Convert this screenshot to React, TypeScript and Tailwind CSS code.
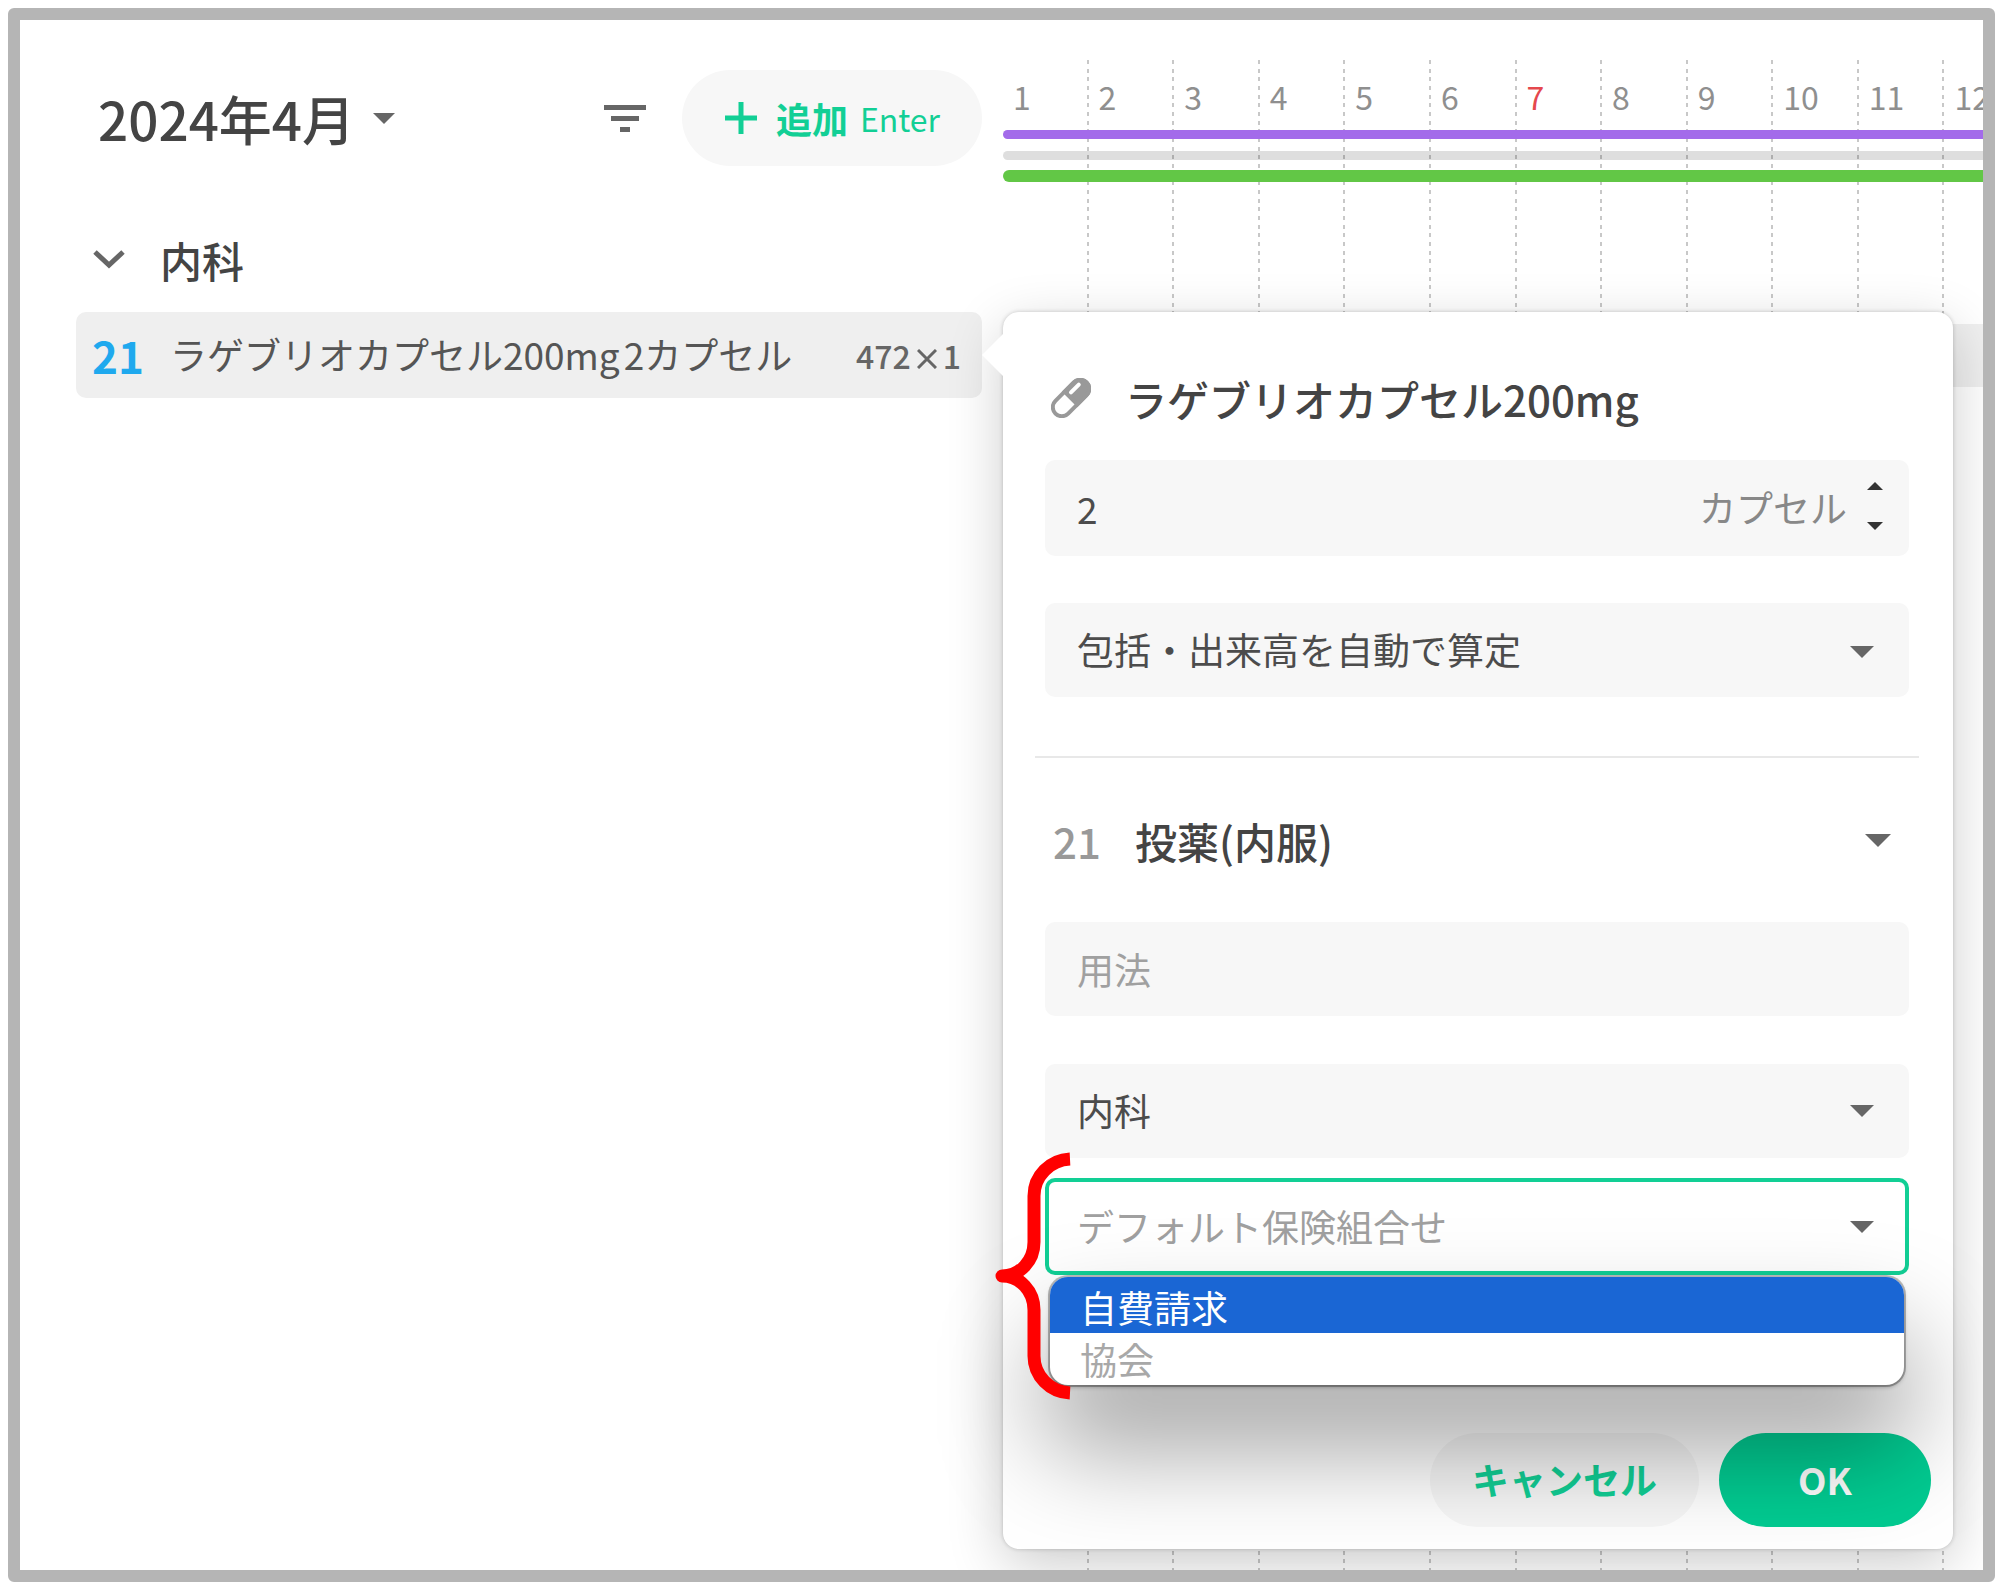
import { useState } from 'react';

const days = [1, 2, 3, 4, 5, 6, 7, 8, 9, 10, 11, 12];
const holidays = [7];

const fieldClass =
  'block w-full appearance-none rounded-[10px] bg-[#f7f7f7] px-8 text-[37px] text-[#4c4c4c] outline-none placeholder:text-[#a0a0a0]';

function Caret({ className = '' }: { className?: string }) {
  return (
    <svg viewBox="0 0 24 12" className={className} fill="#666" aria-hidden="true">
      <path d="M0 0h24L12 12z" />
    </svg>
  );
}

function CapsuleIcon() {
  return (
    <svg viewBox="0 0 40 40" className="size-10" aria-hidden="true">
      <g transform="translate(20 20) rotate(-45)">
        <rect x="-22" y="-9" width="44" height="18" rx="9" fill="#fff" stroke="#999" strokeWidth="4" />
        <path d="M0 -9h13a9 9 0 0 1 0 18h-13z" fill="#999" stroke="#999" strokeWidth="4" />
        <path d="M4 -4h11" stroke="#fff" strokeWidth="4" strokeLinecap="round" />
      </g>
    </svg>
  );
}

function Brace() {
  return (
    <svg
      viewBox="0 0 76 248"
      className="pointer-events-none absolute -top-[26px] -left-[50px] h-[248px] w-[76px]"
      fill="none"
      stroke="#f00"
      strokeWidth="13"
      strokeLinejoin="round"
      aria-hidden="true"
    >
      <path d="M75 7C55 8 39 24 39 44V90C39 109 25 124 7 124C25 124 39 139 39 158V204C39 224 55 240 75 241" />
    </svg>
  );
}

function OrderList() {
  return (
    <section className="w-[906px] shrink-0 pt-[50px]">
      <header className="flex h-24 items-center">
        <button className="flex items-center gap-[18px] pl-[22px] text-[53px] leading-none font-medium text-[#444]">
          2024年4月
          <Caret className="h-[11px] w-[22px]" />
        </button>
        <button className="ml-auto" aria-label="絞り込み">
          <svg viewBox="0 0 42 27" className="h-[27px] w-[42px]" fill="#666">
            <path d="M0 0h42v5H0zM7 11h28v5H7zM16 22h10v5H16z" />
          </svg>
        </button>
        <button className="ml-9 flex h-24 items-center rounded-full bg-[#f7f7f7] px-[42px] text-[#12cf95]">
          <svg viewBox="0 0 34 34" className="mr-[18px] size-[34px]" stroke="currentColor" strokeWidth="5">
            <path d="M17 1v32M1 17h32" />
          </svg>
          <span className="mr-3 text-[36px] font-bold">追加</span>
          <span className="text-[32px]">Enter</span>
        </button>
      </header>

      <button className="mt-[61px] mb-[21px] flex h-16 items-center gap-[34px] pl-4 text-[42px] font-medium text-[#444]">
        <svg viewBox="0 0 34 20" className="h-5 w-[34px]" fill="none" stroke="#666" strokeWidth="5">
          <path d="M3 3l14 13L31 3" />
        </svg>
        内科
      </button>

      <div className="flex h-[86px] items-center rounded-[10px] bg-[#efefef] pr-[21px] pl-4 text-[37px] text-[#555]">
        <span className="w-[78px] text-[44px] font-bold text-[#1fa9ee]">21</span>
        <span>ラゲブリオカプセル200mg</span>
        <span className="ml-1">2カプセル</span>
        <span className="ml-auto flex items-center gap-1.5 text-[32px] font-medium text-[#666]">
          472
          <svg viewBox="0 0 20 20" className="mt-2 size-5" stroke="currentColor" strokeWidth="3">
            <path d="M1 1l18 18M19 1L1 19" />
          </svg>
          1
        </span>
      </div>
    </section>
  );
}

function Timeline() {
  return (
    <div className="h-full overflow-hidden pt-10">
      <div className="relative h-full">
        <div className="grid h-full w-[1027px] grid-cols-12">
          {days.map((day) => (
            <div key={day} className="flex justify-between pl-2.5">
              <span
                className={
                  holidays.includes(day)
                    ? 'pt-3 text-[32px] text-[#e5484d]'
                    : 'pt-3 text-[32px] text-[#8f8f8f]'
                }
              >
                {day}
              </span>
              <span className="w-[2px] bg-[repeating-linear-gradient(to_bottom,#c8c8c8_0_4px,transparent_4px_9px,#c8c8c8_9px_13px,transparent_13px_17px,#c8c8c8_17px_21px,transparent_21px_26px)]" />
            </div>
          ))}
        </div>
        <div className="absolute inset-x-0 top-[70px]">
          <div className="h-[9px] rounded-l-full bg-[#a36bea]" />
          <div className="mt-3 h-[9px] rounded-l-full bg-black/13" />
          <div className="mt-2.5 h-3 rounded-l-full bg-[#62c746]" />
        </div>
        <div className="absolute inset-x-0 top-[264px] h-[63px] bg-[#efefef]" />
      </div>
    </div>
  );
}

function OrderPopover() {
  const [amount, setAmount] = useState(2);
  const [insurance, setInsurance] = useState('');

  return (
    <form
      className="absolute top-[292px] right-[30px] left-0 rounded-2xl bg-white pt-[62px] pr-11 pb-[22px] pl-[42px] shadow-[0_0_4px_rgba(0,0,0,0.2),0_16px_56px_rgba(0,0,0,0.2)]"
      onSubmit={(e) => e.preventDefault()}
    >
      <svg viewBox="0 0 22 44" className="absolute top-[21px] -left-[21px] h-11 w-[22px]" fill="#fff">
        <path d="M22 0v44L0 22z" />
      </svg>

      <h2 className="flex h-12 items-center gap-[34px] pl-1.5 text-[42px] font-medium text-[#444]">
        <CapsuleIcon />
        ラゲブリオカプセル200mg
      </h2>

      <div className="relative mt-[38px]">
        <input
          id="amount"
          aria-label="数量"
          className={`${fieldClass} h-24`}
          value={amount}
          onChange={(e) => setAmount(Number(e.target.value) || 0)}
        />
        <div className="absolute inset-y-0 right-[26px] flex items-center gap-5">
          <label htmlFor="amount" className="text-[37px] text-[#888]">カプセル</label>
          <div className="flex flex-col gap-8 pb-1">
            <button type="button" aria-label="増やす" onClick={() => setAmount(amount + 1)}>
              <svg viewBox="0 0 16 8" className="h-2 w-4" fill="#333">
                <path d="M0 8h16L8 0z" />
              </svg>
            </button>
            <button type="button" aria-label="減らす" onClick={() => setAmount(amount - 1)}>
              <svg viewBox="0 0 16 8" className="h-2 w-4" fill="#333">
                <path d="M0 0h16L8 8z" />
              </svg>
            </button>
          </div>
        </div>
      </div>

      <div className="relative mt-[47px]">
        <select aria-label="算定方法" className={`${fieldClass} h-[94px]`}>
          <option>包括・出来高を自動で算定</option>
        </select>
        <Caret className="pointer-events-none absolute top-[43px] right-[35px] h-3 w-6" />
      </div>

      <hr className="-mx-2.5 mt-[59px] border-t-2 border-[#e8e8e8]" />

      <button type="button" className="mt-[50px] flex h-16 w-full items-center pr-[18px] pl-2 text-[42px] font-medium text-[#444]">
        <span className="w-[82px] text-left text-[#999]">21</span>
        投薬(内服)
        <Caret className="ml-auto h-[13px] w-[26px]" />
      </button>

      <input aria-label="用法" placeholder="用法" className={`${fieldClass} mt-[50px] h-[94px]`} />

      <div className="relative mt-12">
        <select aria-label="診療科" className={`${fieldClass} h-[94px]`}>
          <option>内科</option>
        </select>
        <Caret className="pointer-events-none absolute top-[41px] right-[35px] h-3 w-6" />
      </div>

      <div className="relative mt-5">
        <select
          aria-label="保険組合せ"
          value={insurance}
          onChange={(e) => setInsurance(e.target.value)}
          className="block h-[97px] w-full appearance-none rounded-[10px] border-4 border-[#12cf95] bg-white px-7 text-[37px] text-[#a0a0a0] outline-none"
        >
          <option value="">デフォルト保険組合せ</option>
          <option>自費請求</option>
          <option>協会</option>
        </select>
        <Caret className="pointer-events-none absolute top-[43px] right-[35px] h-3 w-6" />
        <ul
          role="listbox"
          aria-label="保険組合せの候補"
          className="absolute inset-x-[5px] top-[99px] overflow-hidden rounded-[18px] bg-white text-[37px] leading-[52px] shadow-[0_0_0_2px_rgba(0,0,0,0.25),0_2px_4px_rgba(0,0,0,0.3),0_60px_100px_8px_rgba(0,0,0,0.34)]"
        >
          <li role="option" aria-selected="true" className="bg-[#1a66d4] px-[30px] pt-1 text-white">自費請求</li>
          <li role="option" aria-selected="false" className="px-[30px] text-[#a8a8a8]">協会</li>
        </ul>
        <Brace />
      </div>

      <div className="mt-[158px] -mr-[22px] flex justify-end gap-5 text-[37px] font-bold">
        <button type="button" className="h-[94px] rounded-full bg-[#f7f7f7] px-[42px] text-[#12cf95]">キャンセル</button>
        <button type="submit" className="h-[94px] w-[212px] rounded-full bg-[#02cc92] text-white">OK</button>
      </div>
    </form>
  );
}

export default function App() {
  return (
    <div className="flex min-h-screen bg-white pt-2 pr-[5px] pb-px pl-2 font-['Noto_Sans_CJK_JP',sans-serif]">
      <main className="flex flex-1 gap-[21px] overflow-hidden rounded-md border-[12px] border-[#b5b5b5] bg-white pl-14">
        <OrderList />
        <section className="relative min-w-0 flex-1">
          <Timeline />
          <OrderPopover />
        </section>
      </main>
    </div>
  );
}
